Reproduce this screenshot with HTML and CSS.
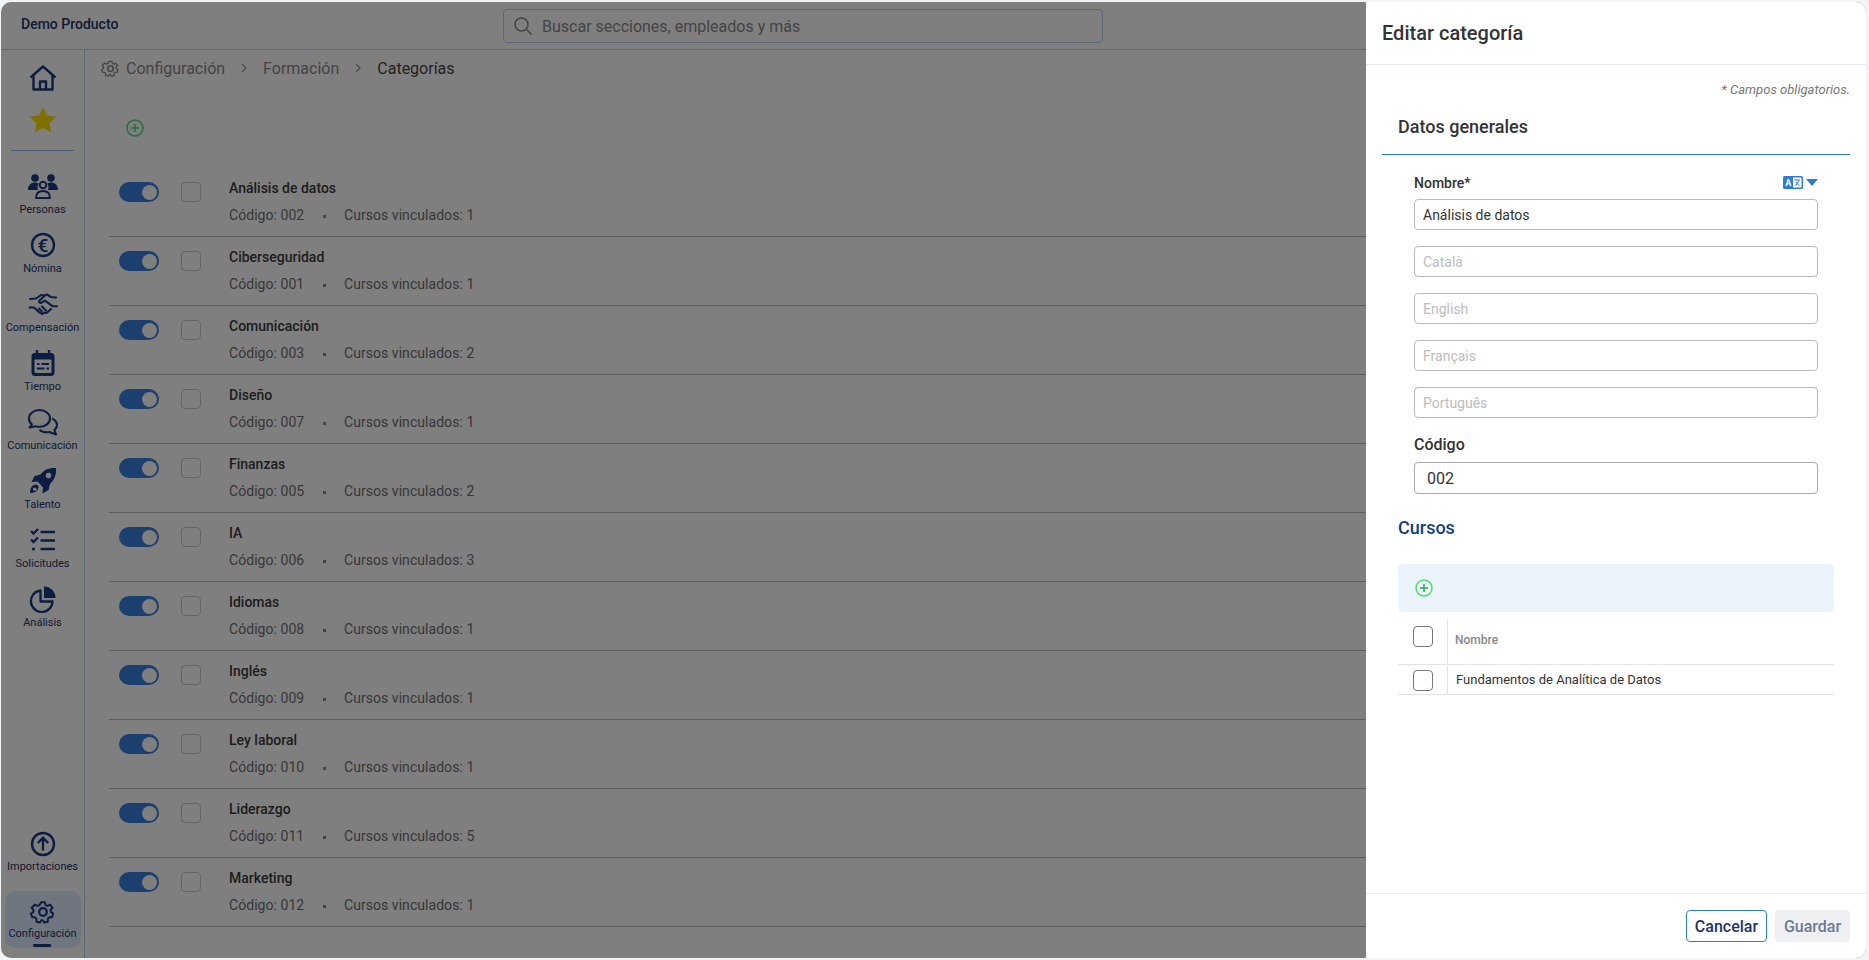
FILE: index.html
```html
<!DOCTYPE html>
<html lang="es">
<head>
    <title>Editar categoría</title>
    <link rel="stylesheet" href="styles.css">
</head>
<body>
<div class="app">
    <header class="topbar">
        <div class="brand">Demo Producto</div>
        <div class="search">
            <svg width="20" height="20" viewBox="0 0 20 20" fill="none" stroke="#8c8c8c" stroke-width="1.6"><circle cx="8.5" cy="8.5" r="6.5"/><path d="M13.3 13.3 18.5 18.5"/></svg>
            <span>Buscar secciones, empleados y más</span>
        </div>
    </header>
    <div class="layout">
        <nav class="sidebar">
            <div class="nav-icon nav-home">
                <svg width="28" height="28" viewBox="0 0 28 28" fill="none" stroke="#173a80" stroke-width="2.4" stroke-linejoin="round"><path d="M1.500 13.500 14 2.500l12.500 11"/><path d="M4.500 11.500V25.500h19V11.500"/><path d="M11 25.500V17.500h6v8"/></svg>
            </div>
            <div class="nav-icon nav-star">
                <svg width="28" height="28" viewBox="0 0 28 28" fill="#ffe000"><path d="M14 1l4 8.500 9.500 1.200-7 6.500 1.900 9.300L14 21.900l-8.400 4.600 1.900-9.300-7-6.500L10 9.500z"/></svg>
            </div>
            <div class="nav-line"></div>
            <a class="nav-item">
                <svg width="32" height="28" viewBox="0 0 32 28" fill="#173a80"><circle cx="8" cy="6" r="3.800"/><circle cx="24" cy="6" r="3.800"/><path d="M1 18c0-5 3-7.500 7-7.500 1.500 0 2.700.3 3.700 1a7 7 0 0 0-.7 6.500zM31 18c0-5-3-7.500-7-7.500-1.500 0-2.700.3-3.700 1a7 7 0 0 1 .7 6.500z"/><circle cx="16" cy="13" r="3.300" fill="none" stroke="#173a80" stroke-width="1.900"/><path d="M9 26c0-5 3-7 7-7s7 2 7 7z" fill="none" stroke="#173a80" stroke-width="1.900" stroke-linejoin="round"/></svg>
                <span>Personas</span>
            </a>
            <a class="nav-item">
                <svg width="28" height="28" viewBox="0 0 28 28"><circle cx="14" cy="14" r="11" fill="none" stroke="#173a80" stroke-width="2.400"/><text x="14" y="20.500" text-anchor="middle" class="euro">€</text></svg>
                <span>Nómina</span>
            </a>
            <a class="nav-item">
                <svg width="30" height="28" viewBox="0 0 30 28" fill="none" stroke="#173a80" stroke-width="2.100" stroke-linecap="round" stroke-linejoin="round"><path d="M2 9l6-.5 5-3.500 3 .5 3-1 4 2.500 5 .5"/><path d="M16.500 6l-5 4.500c-1 1.200.2 2.800 2 2.200l3.500-2 7.500 5.500 4.500 0"/><path d="M1.500 17.500l4.500 0 5.500 5 3 1.500 2-1.500 2 .5 4.500-4"/><path d="M11 18.500l3 3M14 16.500l4 4"/></svg>
                <span>Compensación</span>
            </a>
            <a class="nav-item">
                <svg width="28" height="28" viewBox="0 0 28 28" fill="#173a80"><path d="M8 1v4M20 1v4" stroke="#173a80" stroke-width="2.400"/><path d="M6 4h16a3.500 3.500 0 0 1 3.500 3.500v16A3.500 3.500 0 0 1 22 27H6a3.500 3.500 0 0 1-3.500-3.500v-16A3.500 3.500 0 0 1 6 4z"/><rect x="5.500" y="10.500" width="17" height="13.500" rx="1" fill="#ffffff"/><path d="M8 14h2.500v2H8zM12.500 14H20v2h-7.500zM8 18.500h7.500v2H8zM17.500 18.500H20v2h-2.500z"/></svg>
                <span>Tiempo</span>
            </a>
            <a class="nav-item">
                <svg width="32" height="28" viewBox="0 0 32 28" fill="none" stroke="#173a80" stroke-width="2.100" stroke-linejoin="round"><path d="M12.500 2C6.500 2 2 5.700 2 10.500c0 2.300 1 4.300 2.800 5.800L2.500 19.500l6-1.300c1.300.4 2.600.6 4 .6 6 0 10.500-3.700 10.500-8.300S18.500 2 12.500 2z"/><path d="M25 10.500c3 1.400 5 3.800 5 6.500 0 2-1 3.700-2.500 5l1.500 4.500-6.500-2.500c-1 .2-2 .3-3 .3-3 0-5.500-1-7-2.500"/></svg>
                <span>Comunicación</span>
            </a>
            <a class="nav-item">
                <svg width="28" height="28" viewBox="0 0 28 28" fill="#173a80"><path d="M27 1c-6.500-.5-12 1.500-15.500 6.500L5.500 9 2.500 15l6-.5 5.500 6-.5 6 6-3.500 1.500-6C25 13.500 27.500 8 27 1z"/><circle cx="19.500" cy="8.500" r="2.800" fill="#ffffff"/><path d="M6.500 17.500c-3 .5-5.500 3-5.500 8.500 5.500 0 8-2.500 8.500-5.500a3 3 0 0 0-3-3z"/><circle cx="5.800" cy="22.200" r="1.800" fill="#ffffff"/></svg>
                <span>Talento</span>
            </a>
            <a class="nav-item">
                <svg width="28" height="28" viewBox="0 0 28 28" fill="none" stroke="#173a80" stroke-width="2.300"><path d="M2 5l2.500 2.500L9 3M2 13.500l2.500 2.500L9 11.500"/><path d="M11.500 6H26M11.500 14.500H26M11.500 23H26"/><circle cx="4.500" cy="23" r="1.600" fill="#173a80" stroke="none"/></svg>
                <span>Solicitudes</span>
            </a>
            <a class="nav-item">
                <svg width="28" height="28" viewBox="0 0 28 28"><path d="M11.500 5.500A10.800 10.800 0 1 0 23.500 16.500H11.500z" fill="none" stroke="#173a80" stroke-width="2.300" stroke-linejoin="round"/><path d="M15 1.500a11.500 11.500 0 0 1 11.500 11.500H15z" fill="#173a80"/></svg>
                <span>Análisis</span>
            </a>
            <a class="nav-item nav-import">
                <svg width="28" height="28" viewBox="0 0 28 28" fill="none" stroke="#173a80" stroke-width="2.400"><circle cx="14" cy="14" r="11"/><path d="M14 20.500V8M8.800 13 14 7.800 19.200 13"/></svg>
                <span>Importaciones</span>
            </a>
            <a class="nav-item nav-active">
                <svg class="gear" width="26" height="26" viewBox="0 0 24 24" fill="none" stroke="#173a80" stroke-width="2.100" stroke-linejoin="round"><circle cx="12" cy="12" r="3.500"/><path d="M10 1.500h4l.7 3 2.200 1 2.700-1.500 2.600 3.400-2 2.300.3 2.300 2.400 1.700-1.200 4-3-.1-1.600 1.800.1 3-3.900.9-1.500-2.600H10.200l-1.500 2.600-3.900-.9.100-3-1.600-1.800-3 .1-1.200-4 2.400-1.700.3-2.300-2-2.300L3.400 4l2.700 1.500 2.200-1z" transform="translate(1.700 1.700) scale(.86)"/></svg>
                <span>Configuración</span>
            </a>
        </nav>
        <main class="content">
            <div class="crumbs">
                <svg width="19" height="19" viewBox="0 0 24 24" fill="none" stroke="#8c8c8c" stroke-width="2" stroke-linejoin="round"><circle cx="12" cy="12" r="3.500"/><path d="M10 1.500h4l.7 3 2.200 1 2.700-1.500 2.600 3.400-2 2.300.3 2.300 2.400 1.700-1.200 4-3-.1-1.600 1.800.1 3-3.900.9-1.500-2.600H10.200l-1.500 2.600-3.900-.9.100-3-1.600-1.800-3 .1-1.200-4 2.400-1.700.3-2.300-2-2.300L3.400 4l2.700 1.500 2.200-1z" transform="translate(1.700 1.700) scale(.86)"/></svg>
                <span class="crumb">Configuración</span>
                <svg class="chev" width="6" height="10" viewBox="0 0 6 10" fill="none" stroke="#999" stroke-width="1.200"><path d="M1 1l4 4-4 4"/></svg>
                <span class="crumb">Formación</span>
                <svg class="chev" width="6" height="10" viewBox="0 0 6 10" fill="none" stroke="#999" stroke-width="1.200"><path d="M1 1l4 4-4 4"/></svg>
                <span class="crumb crumb-now">Categorías</span>
            </div>
            <div class="toolbar">
                <svg width="18" height="18" viewBox="0 0 18 18" fill="none" stroke="#4fdc6c" stroke-width="1.500"><circle cx="9" cy="9" r="8"/><path d="M9 5v8M5 9h8"/></svg>
            </div>
            <ul class="rows">
                <li class="row"><span class="toggle"></span><span class="check"></span><div><div class="row-title">Análisis de datos</div><div class="row-sub"><span class="code">Código: 002</span><span class="dot"></span><span>Cursos vinculados: 1</span></div></div></li>
                <li class="row"><span class="toggle"></span><span class="check"></span><div><div class="row-title">Ciberseguridad</div><div class="row-sub"><span class="code">Código: 001</span><span class="dot"></span><span>Cursos vinculados: 1</span></div></div></li>
                <li class="row"><span class="toggle"></span><span class="check"></span><div><div class="row-title">Comunicación</div><div class="row-sub"><span class="code">Código: 003</span><span class="dot"></span><span>Cursos vinculados: 2</span></div></div></li>
                <li class="row"><span class="toggle"></span><span class="check"></span><div><div class="row-title">Diseño</div><div class="row-sub"><span class="code">Código: 007</span><span class="dot"></span><span>Cursos vinculados: 1</span></div></div></li>
                <li class="row"><span class="toggle"></span><span class="check"></span><div><div class="row-title">Finanzas</div><div class="row-sub"><span class="code">Código: 005</span><span class="dot"></span><span>Cursos vinculados: 2</span></div></div></li>
                <li class="row"><span class="toggle"></span><span class="check"></span><div><div class="row-title">IA</div><div class="row-sub"><span class="code">Código: 006</span><span class="dot"></span><span>Cursos vinculados: 3</span></div></div></li>
                <li class="row"><span class="toggle"></span><span class="check"></span><div><div class="row-title">Idiomas</div><div class="row-sub"><span class="code">Código: 008</span><span class="dot"></span><span>Cursos vinculados: 1</span></div></div></li>
                <li class="row"><span class="toggle"></span><span class="check"></span><div><div class="row-title">Inglés</div><div class="row-sub"><span class="code">Código: 009</span><span class="dot"></span><span>Cursos vinculados: 1</span></div></div></li>
                <li class="row"><span class="toggle"></span><span class="check"></span><div><div class="row-title">Ley laboral</div><div class="row-sub"><span class="code">Código: 010</span><span class="dot"></span><span>Cursos vinculados: 1</span></div></div></li>
                <li class="row"><span class="toggle"></span><span class="check"></span><div><div class="row-title">Liderazgo</div><div class="row-sub"><span class="code">Código: 011</span><span class="dot"></span><span>Cursos vinculados: 5</span></div></div></li>
                <li class="row"><span class="toggle"></span><span class="check"></span><div><div class="row-title">Marketing</div><div class="row-sub"><span class="code">Código: 012</span><span class="dot"></span><span>Cursos vinculados: 1</span></div></div></li>
            </ul>
        </main>
    </div>
    <div class="overlay"></div>
    <aside class="drawer">
        <div class="drawer-head">Editar categoría</div>
        <div class="drawer-body">
            <p class="required">* Campos obligatorios.</p>
            <h2 class="section-title section-main">Datos generales</h2>
            <div class="fields">
                <div class="label-row">
                    <label for="name">Nombre*</label>
                    <span class="lang">
                        <svg width="20" height="13" viewBox="0 0 20 13"><rect width="20" height="13" rx="1.500" fill="#2f7bd8"/><rect x="10" y="1.500" width="8.500" height="10" fill="#fff"/><text x="5.300" y="10" text-anchor="middle" class="lang-a">A</text><path d="M11.500 4h5.500M14 3v1M12.500 10l3.500-5.500M13 6l3.500 4" stroke="#2f7bd8" stroke-width="1" fill="none"/></svg>
                        <svg width="12" height="7" viewBox="0 0 12 7" fill="#2f7bd8"><path d="M0 0h12L6 7z"/></svg>
                    </span>
                </div>
                <input class="field" id="name" type="text" value="Análisis de datos">
                <input class="field" type="text" placeholder="Català">
                <input class="field" type="text" placeholder="English">
                <input class="field" type="text" placeholder="Français">
                <input class="field" type="text" placeholder="Português">
                <label class="code-label" for="code">Código</label>
                <input class="field field-code" id="code" type="text" value="002">
            </div>
            <h2 class="section-title section-blue">Cursos</h2>
            <div class="table-tools">
                <svg width="18" height="18" viewBox="0 0 18 18" fill="none" stroke="#4fdc6c" stroke-width="1.500"><circle cx="9" cy="9" r="8"/><path d="M9 5v8M5 9h8" stroke="#2fa84f"/></svg>
            </div>
            <div class="t-row t-head">
                <div class="t-check"><span class="box"></span></div>
                <div class="t-cell">Nombre</div>
            </div>
            <div class="t-row t-line">
                <div class="t-check"><span class="box"></span></div>
                <div class="t-cell">Fundamentos de Analítica de Datos</div>
            </div>
        </div>
        <div class="drawer-foot">
            <button class="btn btn-cancel" type="button">Cancelar</button>
            <button class="btn btn-save" type="button">Guardar</button>
        </div>
    </aside>
</div>
</body>
</html>
```
FILE: styles.css
```css
* { box-sizing: border-box; }
html, body { height: 100%; }
body { margin: 0; background: #f2f3f4; font-family: Roboto, "Liberation Sans", sans-serif; overflow: hidden; }

.app { position: relative; height: 956px; margin: 2px 3px 2px 1px; background: #fff; border-radius: 10px; overflow: hidden; display: flex; flex-direction: column; }
.overlay { position: absolute; inset: 0; background: rgba(0, 0, 0, 0.5); }

.topbar { height: 48px; flex: none; display: flex; align-items: flex-start; border-bottom: 1px solid #bcd0ea; }
.brand { width: 502px; padding: 13px 0 0 20px; font-size: 14px; line-height: 18px; font-weight: 500; color: #1e3468; }
.search { width: 600px; height: 34px; margin-top: 7px; display: flex; align-items: center; gap: 9px; padding-left: 9px; border: 1px solid #b4cdec; border-radius: 4px; font-size: 16px; color: #888; }

.layout { flex: 1; display: flex; min-height: 0; }
.sidebar { width: 84px; flex: none; display: flex; flex-direction: column; align-items: center; border-right: 1px solid #b5d0f0; padding: 14px 0 10px; }
.nav-icon { height: 28px; }
.nav-star { margin-top: 14px; }
.nav-line { width: 63px; height: 1px; margin: 16px 0 6px; background: #8fb6e8; }
.nav-item { width: 76px; height: 59px; padding-top: 15px; display: flex; flex-direction: column; align-items: center; flex: none; color: #1e3468; }
.nav-item svg { height: 28px; flex: none; }
.nav-item span { margin-top: 3px; font-size: 11px; line-height: 14px; white-space: nowrap; }
.euro { font: 500 19px Roboto, sans-serif; fill: #173a80; }
.nav-import { margin-top: auto; margin-bottom: 17px; }
.nav-import span { margin-top: 2px; }
.nav-active { position: relative; height: 57px; padding-top: 7px; background: #deecff; border-radius: 10px; }
.nav-active span { margin-top: 1px; }
.nav-active::after { content: ""; position: absolute; left: 28px; bottom: 1px; width: 18px; height: 3px; background: #173a80; border-radius: 1px; }

.content { flex: 1; min-width: 0; }
.crumbs { height: 36px; padding: 0 0 0 16px; display: flex; align-items: center; font-size: 16px; color: #888; }
.crumb { margin-left: 6px; }
.crumb-now { color: #444; }
.crumb + .chev { margin-left: 16px; }
.chev + .crumb { margin-left: 16px; }
.toolbar { padding: 33px 0 31px 41px; height: 82px; }
.toolbar svg { display: block; }

.rows { list-style: none; margin: 0 0 0 24px; padding: 0; }
.row { height: 69px; display: flex; border-bottom: 1px solid #bbb; padding-left: 10px; }
.toggle { position: relative; width: 40px; height: 20px; margin-top: 14px; background: #377fdc; border-radius: 10px; flex: none; }
.toggle::after { content: ""; position: absolute; right: 2.500px; top: 2.500px; width: 15px; height: 15px; border-radius: 50%; background: #fff; }
.check { width: 20px; height: 20px; margin: 14px 28px 0 22px; border: 1px solid #c8c8c8; border-radius: 4px; flex: none; }
.row-title { margin-top: 10px; font-size: 14px; line-height: 20px; font-weight: 500; color: #3a3a3a; }
.row-sub { margin-top: 7px; display: flex; align-items: center; font-size: 14px; line-height: 20px; letter-spacing: 0.05px; color: #6e6e6e; }
.code { width: 94px; }
.dot { width: 3px; height: 3px; margin: 2px 18px 0 0; background: #888; }

.drawer { position: absolute; top: 0; right: 0; bottom: 0; width: 500px; background: #fff; display: flex; flex-direction: column; }
.drawer-head { height: 63px; flex: none; padding: 19px 0 0 16px; font-size: 20px; line-height: 24px; font-weight: 500; color: #333; border-bottom: 1px solid #e3e6ea; }
.drawer-body { flex: 1; padding: 0 16px; min-height: 0; }
.required { margin: 17px 0 0; text-align: right; font-size: 13px; line-height: 16px; font-style: italic; color: #777; }
.section-title { margin: 0; font-size: 18px; line-height: 24px; font-weight: 500; padding-left: 16px; color: #333; }
.section-main { height: 46px; margin-top: 11px; padding-top: 6px; border-bottom: 1px solid #2f7bd8; }
.section-blue { margin-top: 22px; color: #0f3f80; }

.fields { display: flex; flex-direction: column; padding: 0 32px; }
.label-row { height: 44px; display: flex; justify-content: space-between; align-items: center; padding-top: 11px; font-size: 14px; font-weight: 500; color: #333; }
.lang { display: flex; align-items: center; gap: 3px; }
.lang svg { display: block; }
.lang-a { font: 700 9px Roboto, sans-serif; fill: #fff; }
.field { width: 100%; height: 31px; margin-bottom: 16px; padding: 0 8px; border: 1px solid #bbb; border-radius: 4px; font: 14px Roboto, sans-serif; color: #333; outline: none; }
.field::placeholder { color: #bdbdbd; }
.code-label { margin: 1px 0 7px; font-size: 16px; line-height: 20px; font-weight: 500; color: #333; }
.field-code { height: 32px; margin-bottom: 0; padding: 0 12px; border-color: #aaa; font-size: 16px; }

.table-tools { height: 48px; margin: 24px 16px 0; padding: 15px 0 0 17px; background: #ebf3fb; border-radius: 5px; }
.table-tools svg { display: block; }
.t-row { display: flex; margin: 0 16px; }
.t-check { width: 50px; flex: none; padding-left: 15px; border-right: 1px solid #e3e3e3; }
.box { display: block; width: 20px; height: 21px; border: 1px solid #777; border-radius: 4px; }
.t-head { height: 53px; padding-top: 8px; border-bottom: 1px solid #e3e3e3; }
.t-head .t-check { padding-top: 6px; height: 44px; }
.t-head .t-cell { padding: 13px 0 0 7px; font-size: 12px; line-height: 14px; font-weight: 500; color: #888; }
.t-line { height: 30px; padding-top: 1px; border-bottom: 1px solid #e3e3e3; }
.t-line .t-check { padding-top: 4px; }
.t-line .t-cell { padding: 5px 0 0 8px; font-size: 13px; line-height: 17px; color: #333; }

.drawer-foot { height: 65px; flex: none; display: flex; justify-content: flex-end; gap: 8px; padding: 16px 16px 0 0; border-top: 1px solid #e3e6ea; }
.btn { height: 32px; padding: 0; border-radius: 4px; font: 500 16px Roboto, sans-serif; }
.btn-cancel { width: 81px; background: #fff; border: 1px solid #2f7bd8; color: #1e3468; }
.btn-save { width: 75px; background: #eff0f2; border: 0; color: #6b7c93; }
```
